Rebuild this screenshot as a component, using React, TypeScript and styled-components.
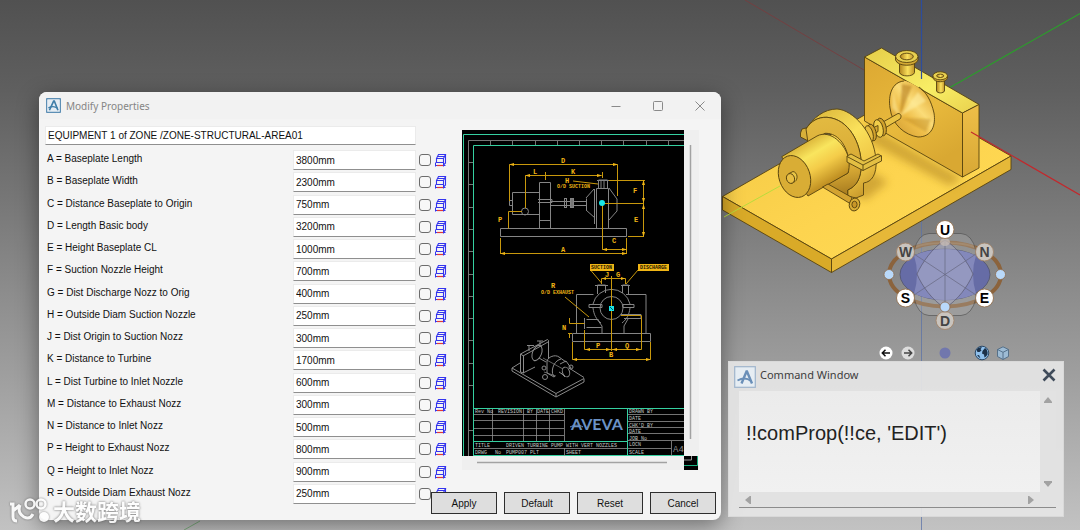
import React from 'react';
import styled, { createGlobalStyle } from 'styled-components';

const GlobalStyle = createGlobalStyle`
  * { box-sizing: border-box; }
  body { margin: 0; font-family: "Liberation Sans", Arial, sans-serif; }
  button, input, textarea { font-family: inherit; margin: 0; }
`;

const Desktop = styled.main`
  position: relative;
  min-height: 100vh;
  overflow: hidden;
  background: linear-gradient(#515151 0%, #5f5f5f 17%, #777 38%, #8b8b8b 54%, #a0a0a0 72%, #c2c2c2 100%);
`;

const SceneDrawing = styled.svg`
  position: absolute;
  left: 0;
  top: 0;
  width: 1080px;
  height: 530px;
`;

/* ---------- Modify Properties dialog ---------- */

const Dialog = styled.section`
  position: absolute;
  left: 39px;
  top: 92px;
  width: 682px;
  padding-bottom: 6px;
  border-radius: 8px;
  background: #f4f4f4;
  box-shadow: 0 6px 22px rgba(0, 0, 0, 0.42);
`;

const TitleBar = styled.header`
  display: flex;
  align-items: center;
  height: 27px;
  padding: 0 12px 0 7px;
  gap: 5px;
  border-radius: 8px 8px 0 0;
  background: #f2f2f2;
`;

const DialogTitle = styled.h1`
  flex: 1;
  margin: 0;
  color: #858585;
  font: 400 10px/16px "Noto Sans", sans-serif;
`;

const CaptionButtons = styled.div`
  display: flex;
  gap: 24px;
`;

const CaptionButton = styled.button`
  display: grid;
  place-items: center;
  width: 18px;
  height: 18px;
  padding: 0;
  border: 0;
  background: none;
  svg { width: 12px; height: 12px; fill: none; stroke: #8a8a8a; }
`;

const DialogBody = styled.div`
  display: flex;
  align-items: flex-start;
  gap: 15px;
  padding: 7px 6px 0;
`;

const Form = styled.form`
  width: 402px;
`;

const TextBox = styled.input`
  display: block;
  width: 123px;
  height: 20px;
  padding: 0 2px;
  border: 1px solid #ebebeb;
  border-bottom: 1px solid #8f8f8f;
  border-radius: 0;
  background: #fff;
  color: #111;
  font-size: 10px;
`;

const ElementBox = styled(TextBox)`
  width: 371px;
  height: 19px;
  margin-bottom: 5px;
`;

const FieldList = styled.div`
  display: flex;
  flex-direction: column;
  justify-content: space-between;
  min-height: 354px;
`;

const FieldRow = styled.div`
  display: grid;
  grid-template-columns: 245px 123px 12px 13px;
  column-gap: 3px;
  align-items: center;
  height: 20px;
`;

const FieldLabel = styled.label`
  padding: 0 0 2px 2px;
  color: #111;
  font-size: 10px;
  line-height: 12px;
  white-space: nowrap;
`;

const Tick = styled.input`
  appearance: none;
  width: 12px;
  height: 12px;
  border: 1px solid #6c6c6c;
  border-radius: 3px;
  background: #f7f7f7;
`;

const BoxIcon = styled.svg`
  width: 13px;
  height: 14px;
`;

const Preview = styled.svg`
  width: 237px;
  height: 340px;
  margin-top: 4px;
`;

const Footer = styled.footer`
  position: relative;
  display: flex;
  justify-content: flex-end;
  gap: 7px;
  margin-top: -12px;
  padding-right: 5px;
`;

const PushButton = styled.button`
  width: 66px;
  height: 22px;
  padding: 0;
  border: 1px solid #2e2e2e;
  border-radius: 0;
  background: #dedede;
  color: #111;
  font-size: 10px;
`;

/* ---------- Command window ---------- */

const CommandWindow = styled.section`
  position: absolute;
  left: 728px;
  top: 361px;
  width: 336px;
  padding: 0 7px 8px 10px;
  border: 1px solid #d9d9d9;
  background: rgba(229, 229, 229, 0.93);
`;

const CommandHeader = styled.header`
  display: flex;
  align-items: center;
  height: 29px;
  gap: 4px;
  margin-left: -5px;
`;

const CommandTitle = styled.h2`
  flex: 1;
  margin: 0;
  padding-bottom: 3px;
  color: #3d3d3d;
  font: 400 11px/18px "Noto Sans", sans-serif;
`;

const CloseButton = styled.button`
  width: 14px;
  height: 14px;
  margin-bottom: 4px;
  padding: 0;
  border: 0;
  background: none;
  svg { display: block; }
`;

const CommandPane = styled.div`
  display: grid;
  grid-template-columns: 1fr 16px;
  grid-template-rows: 101px 15px;
  border-bottom: 1px solid #8c8c8c;
  background: rgba(226, 226, 226, 0.9);
`;

const CommandInput = styled.textarea`
  width: 100%;
  height: 100%;
  padding: 30px 7px 0;
  border: 0;
  resize: none;
  overflow: hidden;
  background: linear-gradient(#ebebeb, #f1f1f1);
  color: #222;
  font-size: 20px;
  line-height: 24px;
`;

const ScrollTrack = styled.div<{ $vertical?: boolean }>`
  display: flex;
  flex-direction: ${(p) => (p.$vertical ? 'column' : 'row')};
  justify-content: space-between;
  align-items: center;
  padding: ${(p) => (p.$vertical ? '6px 0 5px' : '0 5px')};
`;

const Arrow = styled.button<{ $turn: number }>`
  width: 8px;
  height: 6px;
  padding: 0;
  border: 0;
  background: #a2a2a2;
  clip-path: polygon(50% 0, 100% 80%, 100% 100%, 0 100%, 0 80%);
  rotate: ${(p) => p.$turn}deg;
`;

/* ---------- View compass ---------- */

const Compass = styled.div`
  position: absolute;
  left: 879px;
  top: 216px;
  width: 132px;
`;

const CompassDial = styled.svg`
  display: block;
  width: 132px;
  height: 118px;
  font: 700 14px "Liberation Sans", sans-serif;
`;

const CompassTools = styled.div`
  display: flex;
  justify-content: space-between;
  align-items: center;
  margin-top: 12px;
`;

const ToolPair = styled.div`
  display: flex;
  gap: 8px;
`;

const ToolButton = styled.button`
  width: 14px;
  height: 14px;
  padding: 0;
  border: 0;
  background: none;
  svg { display: block; overflow: visible; }
`;

/* ---------- Watermark ---------- */

const Watermark = styled.div`
  position: absolute;
  left: 8px;
  top: 496px;
  display: flex;
  align-items: center;
  gap: 4px;
  color: #fff;
  font: 700 22px/28px "Noto Sans CJK SC", sans-serif;
  text-shadow: 0 0 2px rgba(70, 70, 70, 0.65), 0 0 3px rgba(90, 90, 90, 0.5);
  opacity: 0.9;
  svg { filter: drop-shadow(0 0 1px rgba(70, 70, 70, 0.7)); }
`;

const FIELDS: [string, string][] = [
  ['A = Baseplate Length', '3800mm'],
  ['B = Baseplate Width', '2300mm'],
  ['C = Distance Baseplate to Origin', '750mm'],
  ['D = Length Basic body', '3200mm'],
  ['E = Height Baseplate CL', '1000mm'],
  ['F = Suction Nozzle Height', '700mm'],
  ['G = Dist Discharge Nozz to Orig', '400mm'],
  ['H = Outside Diam Suction Nozzle', '250mm'],
  ['J = Dist Origin to Suction Nozz', '300mm'],
  ['K = Distance to Turbine', '1700mm'],
  ['L = Dist Turbine to Inlet Nozzle', '600mm'],
  ['M = Distance to Exhaust Nozz', '300mm'],
  ['N = Distance to Inlet Nozz', '500mm'],
  ['P = Height to Exhaust Nozz', '800mm'],
  ['Q = Height to Inlet Nozz', '900mm'],
  ['R = Outside Diam Exhaust Nozz', '250mm'],
];

function AppMark({ size, bold }: { size: number; bold?: boolean }) {
  return (
    <svg width={size} height={size} viewBox="0 0 22 22" fill="none" aria-hidden="true">
      <rect x="0.7" y="0.7" width="20.6" height="20.6" rx={bold ? 2 : 0} fill="#e6edf3" stroke={bold ? '#5d8fb5' : '#9fb4cc'} strokeWidth={bold ? 2 : 1.2} />
      <path d={bold ? 'M5 18 11.2 4.5h1L17.500 18' : 'M7.500 17.500 12.500 5.500h.5L18 17.500'} stroke={bold ? '#3f7ea8' : '#6a8fb8'} strokeWidth="2.4" />
      <path d="M3.500 14.500C8 12 13 11.800 17 15" stroke={bold ? '#3f7ea8' : '#6a8fb8'} strokeWidth="1.8" />
    </svg>
  );
}

function DimensionIcon() {
  return (
    <BoxIcon viewBox="0 0 13 14" fill="none" aria-hidden="true">
      <path d="M2.500 5.500h7v4h-7zM2.500 5.500 4.500 1.500h7L9.500 5.500M4 3.500h7M11.500 1v9L9.500 12" stroke="#3434ee" strokeWidth="1.1" />
      <path d="M1.500 9.500v4M1 12.500h2M9.500 9.500v4M9 12.500h2.500" stroke="#3434ee" />
      <path d="M3 12.500h6" stroke="#e03838" strokeWidth="1.2" />
    </BoxIcon>
  );
}

function PumpDrawing() {
  return (
    <Preview viewBox="462 130 237 340" role="img" aria-label="Driven turbine pump data sheet">
      <rect x="462" y="130" width="237" height="340" fill="#efefef" />
      <rect x="462" y="130" width="222" height="326" fill="#000" />
      <rect x="684" y="456" width="14" height="14" fill="#000" />
      <path d="M691.500 456v4H684" stroke="#999" fill="none" />
      <path d="M684 465.500h13.500V456" stroke="#18b080" fill="none" />
      <path d="M690.500 145v294M477 462.500h190" stroke="#a2a2a2" strokeWidth="1.500" />

      <g fill="none" stroke="#35d0a0">
        <path d="M463.500 456V134.500H684M473.500 456V145.500H684M473.500 408.500H684M473.500 441.500H627M473.500 455.500H684M627.500 408v48" />
      </g>
      <path d="M468.500 456V140.500H684M490.500 140v5M512.500 140v5M535.500 140v5M557.500 140v5M579.500 140v5M601.500 140v5M623.500 140v5M646.500 140v5M668.500 140v5M468 162.500h5M468 184.500h5M468 207.500h5M468 229.500h5M468 251.500h5M468 274.500h5M468 296.500h5M468 318.500h5M468 340.500h5M468 363.500h5M468 385.500h5M468 430.500h5" fill="none" stroke="#767676" />

      {/* side elevation */}
      <g fill="none" stroke="#858585">
        <path d="M500.500 228.500h126v8h-126zM512.500 192.500h27v22h-27zM509.500 200.500h3v5h-3zM539.500 182.500h11v46h-11zM538 199.500h14v3h-14M539 220.500h12M551 201.500h35M551 205.500h35" />
        <rect x="564.500" y="198.500" width="2" height="9" />
        <rect x="570.500" y="198.500" width="3" height="9" fill="#777" />
        <path d="M596.500 228V188.500h12V228M594.500 189v35M586.500 198.500v12M586 198l8-9M586 210l9 8M609 188l8 11v12l-8 9M598.500 188v-8h9v8M597 180.500h12M601 181v7M604 181v7" />
        <circle cx="525" cy="211.500" r="3.500" />
      </g>
      <g fill="none" stroke="#c8980c">
        <path d="M509.500 201V164.500h108V196M525.500 208V175.500h76M545.500 172v8M602.500 172v6M609 180.500h36M643.500 180v57M602 203.500h42M628 236.500h16M602.500 205v44.500h24v-11M500.500 238v16M626.500 238v16M500 253.500h126M522 211.500h-13.500v17M573 181l25 3" />
      </g>
      <g fill="#f0b515">
        <path d="M509 164.500l5-1.500v3zM618 164.500l-5-1.500v3zM525 175.500l5-1.500v3zM602 175.500l-5-1.500v3zM500 253.500l5-1.500v3zM627 253.500l-5-1.500v3zM602 249.500l5-1.500v3zM627 249.500l-5-1.500v3zM643.500 180l-1.500 5h3zM643.500 203l-1.500-5h3zM643.500 204l-1.500 5h3zM643.500 237l-1.500-5h3z" />
      </g>
      <circle cx="602" cy="203" r="3" fill="#18e6e8" />
      <g fill="#f0b515" fontFamily="Liberation Mono, monospace" fontSize="7" fontWeight="700">
        <text x="561" y="163">D</text>
        <text x="533" y="174">L</text>
        <text x="571" y="174">K</text>
        <text x="565" y="183">H</text>
        <text x="557" y="188" fontSize="5">O/D SUCTION</text>
        <text x="633" y="193">F</text>
        <text x="634" y="222">E</text>
        <text x="612" y="243">C</text>
        <text x="561" y="252">A</text>
        <text x="498" y="222">P</text>
      </g>

      {/* end elevation */}
      <g fill="none" stroke="#858585">
        <path d="M572.500 333.500h78v8h-78zM576.500 333v-38.500h17M626 294.500h20V333M597.500 294v-9h8v8M595 285.500h13M622.500 293v-8h6v9M621 285.500h9M589 304.500h13v3h-13zM623 304.500h11v3h-11zM597 319l5 7v7M628 319l-4 7v7M586.500 319.500h12M586.500 327.500h15M584.500 318v11M621 314.500h20v4h-17" />
        <path d="M593 304a19 19 0 0 1 37 0M593 308c1 7 3 11 8 15M630 308c-1 7-3 11-8 15" />
        <circle cx="611.500" cy="308" r="11.500" />
      </g>
      <g fill="none" stroke="#c8980c">
        <path d="M611.500 276v75M601.500 284v-5.500h24v5.500M601.500 283l-11-13M626 284l12-14M565 297l24 20M569.500 318v5.500h15M569.500 333v5M584.500 330v19.500h57v-34M572.500 342v17.500h78V342M568 333.500h4M621 315.500h20" />
      </g>
      <g fill="#f0b515">
        <path d="M572 359.500l5-1.500v3zM651 359.500l-5-1.500v3zM585 349.500l5-1.500v3zM641 349.500l-5-1.500v3zM611 349.500l-5-1.500v3zM612 349.500l5-1.500v3zM602 278.500l4-1.500v3zM625 278.500l-4-1.500v3z" />
        <rect x="590" y="264" width="24" height="7" />
        <rect x="638" y="264" width="31" height="7" />
      </g>
      <g fontFamily="Liberation Mono, monospace" fontSize="5" fontWeight="700">
        <g fill="#1c1500">
          <text x="591" y="269">SUCTION</text>
          <text x="640" y="269">DISCHARGE</text>
        </g>
        <g fill="#f0b515">
          <text x="605" y="277" fontSize="7">J</text>
          <text x="616" y="277" fontSize="7">G</text>
          <text x="551" y="288" fontSize="7">R</text>
          <text x="541" y="294">O/D EXHAUST</text>
          <text x="562" y="330" fontSize="7">N</text>
          <text x="596" y="348" fontSize="7">P</text>
          <text x="625" y="348" fontSize="7">Q</text>
          <text x="609" y="357" fontSize="7">B</text>
        </g>
      </g>
      <rect x="609" y="306" width="5" height="5" fill="#18e6e8" />
      <path d="M610 307l3 3" stroke="#056" />

      {/* isometric sketch */}
      <g fill="none" stroke="#8a8a8a">
        <path d="M512 368l44 25.500V397l-44-26zM556 393.500l28-15V382l-28 15M512 368l8-5M569 368l15 9.500M520.500 372V354l27-14.500 1 1V359M520.500 354l3 2v17l-3-1M523 356l25-14M523 373l12-6" />
        <ellipse cx="537" cy="353" rx="4.500" ry="8" transform="rotate(22 537 353)" />
        <path d="M527 345.500h7M529 346v5M537 341h6M540 341v6M539 358l7 4" />
        <path d="M547 361c1-4 8-7 12-4l7 5M547 361v12l7 4M555 377c-5-2-3-16 6-18M559 372l6 4" />
        <path d="M560 364l6-3 5 7M561 373l4 4" />
        <ellipse cx="566" cy="372" rx="3.500" ry="5" transform="rotate(-20 566 372)" />
        <circle cx="545" cy="377" r="2.500" /><circle cx="571" cy="367" r="2" /><circle cx="544" cy="368" r="2" />
        <path d="M543 358l20 11M544 372l12 4" strokeWidth=".7" />
      </g>

      {/* title block */}
      <g fill="none" stroke="#909090" strokeWidth=".8">
        <path d="M474 414.500h90M474 420.500h90M474 428.500h90M474 435.500h90M492.500 409v32M523.500 409v32M536.500 409v32M549.500 409v32M564.500 409v32M628 414.500h56M628 421.500h56M628 427.500h56M628 433.500h56M628 440.500h56M474 448.500h153M564.500 448v8M671.500 441v15M628 448.500h43" />
      </g>
      <g fill="#c4c4c4" fontFamily="Liberation Mono, monospace" fontSize="5">
        <text x="475" y="413">Rev No</text>
        <text x="498" y="413">REVISION</text>
        <text x="527" y="413">BY</text>
        <text x="537" y="413">DATE</text>
        <text x="551" y="413">CHKD</text>
        <text x="629" y="413">DRAWN BY</text>
        <text x="629" y="420">DATE</text>
        <text x="629" y="427">CHK'D BY</text>
        <text x="629" y="433">DATE</text>
        <text x="629" y="440">JOB No</text>
        <text x="629" y="446">LOCN</text>
        <text x="629" y="454">SCALE</text>
        <text x="475" y="447">TITLE</text>
        <text x="506" y="447">DRIVEN TURBINE PUMP WITH VERT NOZZLES</text>
        <text x="475" y="454">DRWG</text>
        <text x="495" y="454">No</text>
        <text x="506" y="454">PUMP007 PLT</text>
        <text x="566" y="454">SHEET</text>
        <text x="673" y="452" fontSize="9" fill="#8c8c8c">A4</text>
      </g>
      <text x="571" y="430" fill="#6b92c6" fontFamily="Lato, sans-serif" fontWeight="700" fontSize="16">AVEVA</text>
      <path d="M570 427c5-2.500 9-2.500 13 0" stroke="#6b92c6" fill="none" />
    </Preview>
  );
}

function ModelScene() {
  return (
    <SceneDrawing viewBox="0 0 1080 530" role="img" aria-label="3D model of a driven turbine pump">
      <defs>
        <linearGradient id="plate" x1="0" y1="0" x2="1" y2="1">
          <stop offset="0" stopColor="#f2c843" />
          <stop offset=".55" stopColor="#fdd44f" />
          <stop offset="1" stopColor="#ffdc55" />
        </linearGradient>
        <linearGradient id="wall" x1="0" y1="0" x2="0.500" y2="1">
          <stop offset="0" stopColor="#dca832" />
          <stop offset=".6" stopColor="#e8b93c" />
          <stop offset="1" stopColor="#d9a832" />
        </linearGradient>
        <linearGradient id="wallTop" x1="0" y1="0" x2="1" y2="1">
          <stop offset="0" stopColor="#e6cd48" />
          <stop offset=".6" stopColor="#f8ee66" />
          <stop offset="1" stopColor="#e9d04c" />
        </linearGradient>
        <linearGradient id="wallEnd" x1="0" y1="0" x2="0" y2="1">
          <stop offset="0" stopColor="#eebf48" />
          <stop offset="1" stopColor="#d8a835" />
        </linearGradient>
        <linearGradient id="drum" gradientUnits="userSpaceOnUse" x1="802" y1="144" x2="826" y2="184">
          <stop offset="0" stopColor="#dcb63a" />
          <stop offset=".3" stopColor="#f9e55e" />
          <stop offset=".6" stopColor="#f4cc49" />
          <stop offset="1" stopColor="#c19123" />
        </linearGradient>
        <linearGradient id="ring" gradientUnits="userSpaceOnUse" x1="815" y1="112" x2="870" y2="190">
          <stop offset="0" stopColor="#dcb83c" />
          <stop offset=".4" stopColor="#fae15b" />
          <stop offset=".75" stopColor="#efc645" />
          <stop offset="1" stopColor="#c89a2c" />
        </linearGradient>
        <linearGradient id="ringFace" gradientUnits="userSpaceOnUse" x1="830" y1="120" x2="842" y2="192">
          <stop offset="0" stopColor="#e2b940" />
          <stop offset=".7" stopColor="#d8aa35" />
          <stop offset="1" stopColor="#ad8122" />
        </linearGradient>
        <linearGradient id="tube" x1="0" y1="0" x2="1" y2="0">
          <stop offset="0" stopColor="#b2841f" />
          <stop offset=".55" stopColor="#fae05b" />
          <stop offset="1" stopColor="#c0932a" />
        </linearGradient>
        <linearGradient id="cone" gradientUnits="userSpaceOnUse" x1="892" y1="128" x2="932" y2="92">
          <stop offset="0" stopColor="#d4a034" />
          <stop offset=".35" stopColor="#eebd48" />
          <stop offset=".6" stopColor="#fbdc78" />
          <stop offset="1" stopColor="#e2ab36" />
        </linearGradient>
        <filter id="soft" x="-30%" y="-30%" width="160%" height="160%">
          <feGaussianBlur stdDeviation="4" />
        </filter>
        <filter id="blend" x="-20%" y="-20%" width="140%" height="140%">
          <feGaussianBlur stdDeviation="1.200" />
        </filter>
      </defs>

      {/* axes behind the model */}
      <path d="M745 0 864 70" stroke="#7b3b3d" opacity=".8" />
      <path d="M1080 13.500 950 87.500" stroke="#2d9b2d" strokeWidth="1.200" />
      <path d="M184 530l16-9" stroke="#7fae7f" />
      <path d="M921.500 215V530" stroke="#5c73a8" opacity=".75" />

      <g stroke="#57430f" strokeWidth=".9" strokeLinejoin="round">
        {/* baseplate */}
        <path d="M722.500 196.500 902 93.500 1011 156 831.500 259z" fill="url(#plate)" />
        <path d="M722.500 196.500 831.500 259V272.500L722.500 210z" fill="#d9aa28" />
        <path d="M831.500 259 1011 156V169.500L831.500 272.500z" fill="#e6b838" />
      </g>
      <path d="M840 190 872 172 888 182 866 200zM866 124 962 178 950 186 866 140z" fill="#a87c1a" opacity=".5" filter="url(#soft)" />
      <path d="M780 186 724 217" stroke="#b8dc3c" />

      <g stroke="#57430f" strokeWidth=".9" strokeLinejoin="round">
        {/* pump block */}
        <path d="M864.500 57 962.500 113V177L864.500 121z" fill="url(#wall)" />
        <path d="M864.500 57 881.500 48 979 104.500 962.500 113z" fill="url(#wallTop)" />
        <path d="M962.500 113 979 104.500V168L962.500 177z" fill="url(#wallEnd)" />
      </g>
      <path d="M921.500 0V79" stroke="#2d4d9c" strokeWidth="1.200" />
      <path d="M971 132 1080 195" stroke="#c3282c" strokeWidth="1.200" />

      {/* suction cone */}
      <path d="M906 81C892 82 888 95 890 108 892 125 905 135 918 137 932 137 936 125 934 113 931 98 921 86 906 81z" fill="url(#cone)" />
      <g filter="url(#blend)">
        <path d="M900 116 902 84 912 86z" fill="#b47d1c" opacity=".6" />
        <path d="M900 116 918 92 926 101z" fill="#fff0a4" opacity=".6" />
        <path d="M900 116 893 92 892 108z" fill="#fff0a4" opacity=".5" />
        <path d="M902 118 931 119 926 132z" fill="#b8821f" opacity=".4" />
      </g>
      <path d="M904 81C892 82 888 95 890 108 892 125 905 135 918 137 932 137 936 125 934 113 931 100 926 92 919 87" fill="none" stroke="#57430f" strokeWidth=".9" />

      <g stroke="#57430f" strokeWidth=".9">
        {/* top nozzles */}
        <path d="M899.500 61v11.500c1 4.500 14 4.500 15 0V61z" fill="url(#tube)" />
        <path d="M895.500 57v3c2 7 20.500 7 22.500 0v-3z" fill="#d3a934" />
        <ellipse cx="906.800" cy="56.500" rx="11.200" ry="6" fill="#e8d050" />
        <ellipse cx="906.800" cy="56.500" rx="6.500" ry="3.300" fill="url(#tube)" />
        <path d="M936.500 80v11c1 2.500 7 2.500 8 0V80z" fill="url(#tube)" />
        <path d="M933 76v2c1.500 5 13 5 14.500 0v-2z" fill="#d3a934" />
        <ellipse cx="940.200" cy="75.800" rx="7.300" ry="4" fill="#e8d050" />
        <ellipse cx="940.200" cy="75.800" rx="3.500" ry="1.700" fill="url(#tube)" />

        {/* shaft and coupling */}
        <path d="M883 122 898 113.500c3 0 4 3 2 5.500L885 128z" fill="#e9c244" />
        <ellipse cx="881.500" cy="127" rx="4.500" ry="9" transform="rotate(-14 881.500 127)" fill="#d0a12d" />
        <ellipse cx="878.500" cy="128.500" rx="4.500" ry="9" transform="rotate(-14 878.500 128.500)" fill="#f0cd4a" />
        <path d="M868 130 878 125.500v6L869 137z" fill="#d7a932" />
        <ellipse cx="872" cy="132.500" rx="4" ry="8.500" transform="rotate(-14 872 132.500)" fill="#d0a12d" />
        <ellipse cx="869" cy="134" rx="4" ry="8.500" transform="rotate(-14 869 134)" fill="#e6bd40" />

        {/* turbine casing */}
        <path d="M800.500 133 802 129 806 128 818 134V146L800.500 137z" fill="#d8b039" />
        <path d="M806 129C813 118 824 109 837 109 853 110 874 132 876 160 877 174 872 182 863.500 183V195L856 198 847.700 196V190C857 186 861 178 861.300 165 861 143 849 119 827 117.300 818 117 811 121 806 129z" fill="url(#ring)" />
        <path d="M806 129C811 121 818 117 827 117.300 849 119 861 143 861.300 165 861 178 857 186 847.700 190V196L833 191 826 185 848 173 849 160C845 140 835 133 825 133.300L808 143z" fill="url(#ringFace)" />
        <path d="M781.700 156.700 817 136C830 129 846 144 849 160 849.500 166 849 170 848 173L808 196z" fill="url(#drum)" />
        <ellipse cx="794.500" cy="176.500" rx="15.500" ry="21.500" transform="rotate(-19 794.500 176.500)" fill="#d9ad35" />
        <path d="M789 173.500 793 171.500c5 1 5 8 2 10l-4 2z" fill="#e8c546" />
        <ellipse cx="790.500" cy="178.500" rx="4" ry="5" transform="rotate(-19 790.500 178.500)" fill="#e8be43" />
        <path d="M847 156 851 154 864 161 878 154 881.500 156V161L863 170.500 847 162z" fill="#e3bf43" />
        <path d="M847 156.500 863 165 881.500 155.500M863 165V170.500" fill="none" />
        {/* exhaust pipe */}
        <path d="M822.500 187 828 184 852 197.500 850 203.500z" fill="#d3a331" />
        <ellipse cx="854.500" cy="204.500" rx="5.200" ry="6.500" transform="rotate(15 854.500 204.500)" fill="#d9ad35" />
        <ellipse cx="854.500" cy="204.500" rx="2.600" ry="3.300" fill="#c89628" />
      </g>
    </SceneDrawing>
  );
}

const POINTS: { t: string; x: number; y: number; far?: boolean }[] = [
  { t: 'W', x: 26.5, y: 36, far: true },
  { t: 'N', x: 105.5, y: 36, far: true },
  { t: 'D', x: 66, y: 104.5, far: true },
  { t: 'U', x: 66, y: 13.5 },
  { t: 'S', x: 26.5, y: 82 },
  { t: 'E', x: 105.5, y: 82 },
];

function ViewCompass() {
  return (
    <Compass>
      <CompassDial viewBox="0 0 132 118" role="img" aria-label="View compass">
        <ellipse cx="66" cy="58.500" rx="56" ry="32" fill="none" stroke="#8b633c" strokeWidth="4" />
        <path d="M33 33C44 25 88 25 99 33" fill="none" stroke="#a88966" strokeWidth="2" opacity=".5" />
        <path d="M35 35Q39 18 50 17.500H82Q93 18 97 35 91 58 97 82 93 99 82 99.500H50Q39 99 35 82 41 58 35 35z" fill="#bdbdbd" fillOpacity=".28" stroke="#4a4a4a" strokeWidth=".6" />
        <ellipse cx="66" cy="58.500" rx="45" ry="25.500" fill="#666ca6" stroke="#4b4d67" strokeWidth=".7" />
        <path d="M35 39.500C52 31 80 31 97 39.500Q91 58 97 77.500C80 86 52 86 35 77.500Q41 58 35 39.500z" fill="#8388bb" />
        <path d="M66 24C53 32 43 47 38 58 43 70 53 84 66 92 79 84 89 70 94 58 89 47 79 32 66 24z" fill="#a5a7c6" fillOpacity=".5" stroke="#57586f" strokeWidth=".7" />
        <path d="M66 24V92M35 38 97 79M97 38 35 79" stroke="#666780" strokeWidth=".7" />
        <ellipse cx="66" cy="26" rx="5" ry="4" fill="#c7bdb8" opacity=".75" />
        {POINTS.map((p) => (
          <g key={p.t}>
            <circle cx={p.x} cy={p.y} r="9" fill={p.far ? '#c9c4be' : '#fff'} stroke={p.far ? '#a3866c' : '#93704f'} strokeWidth=".9" />
            <text x={p.x} y={p.y + 5} textAnchor="middle" fill={p.far ? '#444' : '#000'}>{p.t}</text>
          </g>
        ))}
        {[[10, 58.5], [121.5, 58.5], [66, 91]].map(([x, y]) => (
          <circle key={`${x}`} cx={x} cy={y} r="5" fill="#b9d9fa" stroke="#8d6b4c" strokeWidth=".8" />
        ))}
      </CompassDial>
      <CompassTools>
        <ToolPair>
          <ToolButton aria-label="Previous view">
            <svg width="14" height="14" viewBox="0 0 14 14"><circle cx="7" cy="7" r="6.500" fill="#fff" /><path d="M11 7H3.500M6.500 3.800 3.300 7l3.200 3.200" fill="none" stroke="#111" strokeWidth="1.500" /></svg>
          </ToolButton>
          <ToolButton aria-label="Next view">
            <svg width="14" height="14" viewBox="0 0 14 14"><circle cx="7" cy="7" r="6.500" fill="#ddd" /><path d="M3 7h7.500M7.500 3.800 10.700 7l-3.200 3.200" fill="none" stroke="#444" strokeWidth="1.500" /></svg>
          </ToolButton>
        </ToolPair>
        <ToolButton aria-label="Centre view">
          <svg width="14" height="14" viewBox="0 0 14 14"><circle cx="7" cy="7" r="5.500" fill="#7177ad" /></svg>
        </ToolButton>
        <ToolPair>
          <ToolButton aria-label="World">
            <svg width="14" height="14" viewBox="0 0 14 14"><circle cx="7" cy="7" r="6.800" fill="#8fc0ec" stroke="#2b4866" /><path d="M1.500 4C3 1.500 5 1 7 1.500L5.500 3 6.500 4.500 4.500 6 2.500 6zM7.500 5 10 2C12 3 13 6 12.500 8.500L11 10.500 9.500 11.500 9 8.500 7 7.500zM2 9.500 4 9 5.500 12.500z" fill="#1c3149" /></svg>
          </ToolButton>
          <ToolButton aria-label="Box view">
            <svg width="14" height="14" viewBox="0 0 14 14"><path d="M6 .8 11.500 3.500V10.500L6 13.500.5 10.500V3.500z" fill="#9dbbd4" stroke="#4e6a83" strokeWidth=".9" /><path d="M.5 3.500 6 6.300 11.500 3.500M6 6.300v7" fill="none" stroke="#4e6a83" strokeWidth=".9" /></svg>
          </ToolButton>
        </ToolPair>
      </CompassTools>
    </Compass>
  );
}

export default function App() {
  return (
    <>
      <GlobalStyle />
      <Desktop>
        <ModelScene />
        <ViewCompass />

        <Dialog aria-labelledby="dialog-title">
          <TitleBar>
            <AppMark size={15} bold />
            <DialogTitle id="dialog-title">Modify Properties</DialogTitle>
            <CaptionButtons>
              <CaptionButton aria-label="Minimise"><svg viewBox="0 0 12 12"><path d="M1.500 6.500h9" /></svg></CaptionButton>
              <CaptionButton aria-label="Maximise"><svg viewBox="0 0 12 12"><rect x="1.500" y="1.500" width="9" height="9" rx="1" /></svg></CaptionButton>
              <CaptionButton aria-label="Close"><svg viewBox="0 0 12 12"><path d="m1.500 1.500 9 9m0-9-9 9" /></svg></CaptionButton>
            </CaptionButtons>
          </TitleBar>
          <DialogBody>
            <Form id="properties">
              <ElementBox aria-label="Element" defaultValue="EQUIPMENT 1 of ZONE /ZONE-STRUCTURAL-AREA01" />
              <FieldList>
                {FIELDS.map(([label, value]) => {
                  const id = `field-${label[0]}`;
                  return (
                    <FieldRow key={id}>
                      <FieldLabel htmlFor={id}>{label}</FieldLabel>
                      <TextBox id={id} defaultValue={value} />
                      <Tick type="checkbox" aria-label={`Show ${label[0]}`} />
                      <DimensionIcon />
                    </FieldRow>
                  );
                })}
              </FieldList>
            </Form>
            <PumpDrawing />
          </DialogBody>
          <Footer>
            <PushButton type="submit" form="properties">Apply</PushButton>
            <PushButton type="button">Default</PushButton>
            <PushButton type="reset" form="properties">Reset</PushButton>
            <PushButton type="button">Cancel</PushButton>
          </Footer>
        </Dialog>

        <CommandWindow aria-labelledby="command-title">
          <CommandHeader>
            <AppMark size={22} />
            <CommandTitle id="command-title">Command Window</CommandTitle>
            <CloseButton aria-label="Close">
              <svg width="14" height="14" viewBox="0 0 14 14"><path d="m1.500 1.500 11 11m0-11-11 11" stroke="#3f4b5a" strokeWidth="2.600" /></svg>
            </CloseButton>
          </CommandHeader>
          <CommandPane>
            <CommandInput aria-label="Command" spellCheck={false} defaultValue="!!comProp(!!ce, 'EDIT')" />
            <ScrollTrack $vertical>
              <Arrow $turn={0} aria-label="Scroll up" />
              <Arrow $turn={180} aria-label="Scroll down" />
            </ScrollTrack>
            <ScrollTrack>
              <Arrow $turn={270} aria-label="Scroll left" />
              <Arrow $turn={90} aria-label="Scroll right" />
            </ScrollTrack>
          </CommandPane>
        </CommandWindow>

        <Watermark>
          <svg width="41" height="28" viewBox="0 0 41 28" fill="none" stroke="#fff" strokeWidth="3">
            <path d="M2 8h3v13q0 4 4 4M5 15l7-6M12 9q-3 8 4 12 6 3 9-3" />
            <circle cx="22" cy="8" r="4.500" strokeWidth="2.500" />
            <circle cx="33" cy="8" r="4.500" strokeWidth="2.500" />
            <circle cx="36" cy="21" r="5" fill="#fff" stroke="none" />
          </svg>
          大数跨境
        </Watermark>
      </Desktop>
    </>
  );
}
